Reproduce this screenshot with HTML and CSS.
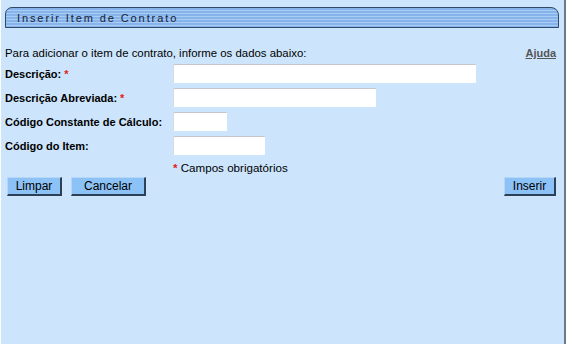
FILE: index.html
```html
<!DOCTYPE html>
<html>
<head>
<meta charset="utf-8">
<link rel="stylesheet" href="styles.css">
</head>
<body>
<div class="page">
  <div class="titlebar"><span class="title">Inserir Item de Contrato</span></div>
  <div class="intro">
    <span>Para adicionar o item de contrato, informe os dados abaixo:</span>
    <a class="help" href="#">Ajuda</a>
  </div>
  <div class="form">
    <label class="lbl">Descrição:<span class="req">*</span></label>
    <div class="field"><span class="input w1"></span></div>
    <label class="lbl">Descrição Abreviada:<span class="req">*</span></label>
    <div class="field"><span class="input w2"></span></div>
    <label class="lbl">Código Constante de Cálculo:</label>
    <div class="field"><span class="input w3"></span></div>
    <label class="lbl">Código do Item:</label>
    <div class="field"><span class="input w4"></span></div>
    <div></div>
    <div class="note"><span class="req">*</span> Campos obrigatórios</div>
  </div>
  <div class="actions">
    <div class="left">
      <button class="btn b-limpar">Limpar</button>
      <button class="btn b-cancelar">Cancelar</button>
    </div>
    <button class="btn b-inserir">Inserir</button>
  </div>
</div>
</body>
</html>
```
FILE: styles.css
```css
html, body {
  margin: 0;
  padding: 0;
  background: #ffffff;
}
.page {
  box-sizing: border-box;
  width: 566px;
  height: 344px;
  padding-left: 1px;
  background: #cce5fc;
  background-clip: content-box;
  border-right: 2px solid #6a7a8a;
  font-family: "Liberation Sans", Arial, sans-serif;
  font-size: 11.4px;
  color: #000;
  overflow: hidden;
}
.titlebar {
  margin: 7px 5px 0 4px;
  height: 19px;
  border: 1px solid #2e4a68;
  border-radius: 7px 8px 0 0;
  background: repeating-linear-gradient(to bottom, #86b4ea 0px, #86b4ea 2px, #a8ccf4 2px, #a8ccf4 3px);
  display: flex;
  align-items: center;
  padding-left: 11px;
}
.title {
  font-family: "Liberation Sans", Arial, sans-serif;
  font-size: 11px;
  letter-spacing: 1.9px;
  color: #14223a;
}
.intro {
  display: flex;
  justify-content: space-between;
  margin: 18px 8px 0 4px;
  line-height: 14px;
}
.help {
  color: #555;
  font-weight: bold;
  text-decoration: underline;
  font-size: 11px;
}
.form {
  display: grid;
  grid-template-columns: 168px 1fr;
  grid-auto-rows: 24px;
  margin: 1px 0 0 4px;
  align-items: center;
}
.lbl {
  font-weight: bold;
  font-size: 11px;
  padding-top: 2px;
}
.req {
  color: #e02020;
  font-weight: bold;
  margin-left: 3px;
}
.note .req { margin-left: 0; }
.input {
  display: block;
  box-sizing: border-box;
  height: 19px;
  background: #fff;
  border-top: 1px solid #c4c8cc;
  border-left: 1px solid #d8dce0;
  border-radius: 1px;
}
.w1 { width: 303px; }
.w2 { width: 203px; }
.w3 { width: 54px; }
.w4 { width: 92px; }
.note {
  font-size: 11.6px;
  margin-top: -3px;
}
.actions {
  display: flex;
  justify-content: space-between;
  margin: -4px 8px 0 6px;
}
.left { display: flex; gap: 9px; }
.btn {
  box-sizing: border-box;
  height: 19px;
  padding: 0;
  font-family: "Liberation Sans", Arial, sans-serif;
  font-size: 12px;
  color: #000;
  background: #8cc2f6;
  border: 1px solid #b4d6f8;
  border-right: 2px solid #2c4056;
  border-bottom: 2px solid #2c4056;
}
.b-limpar { width: 55px; }
.b-cancelar { width: 75px; }
.b-inserir { width: 52px; }
```
